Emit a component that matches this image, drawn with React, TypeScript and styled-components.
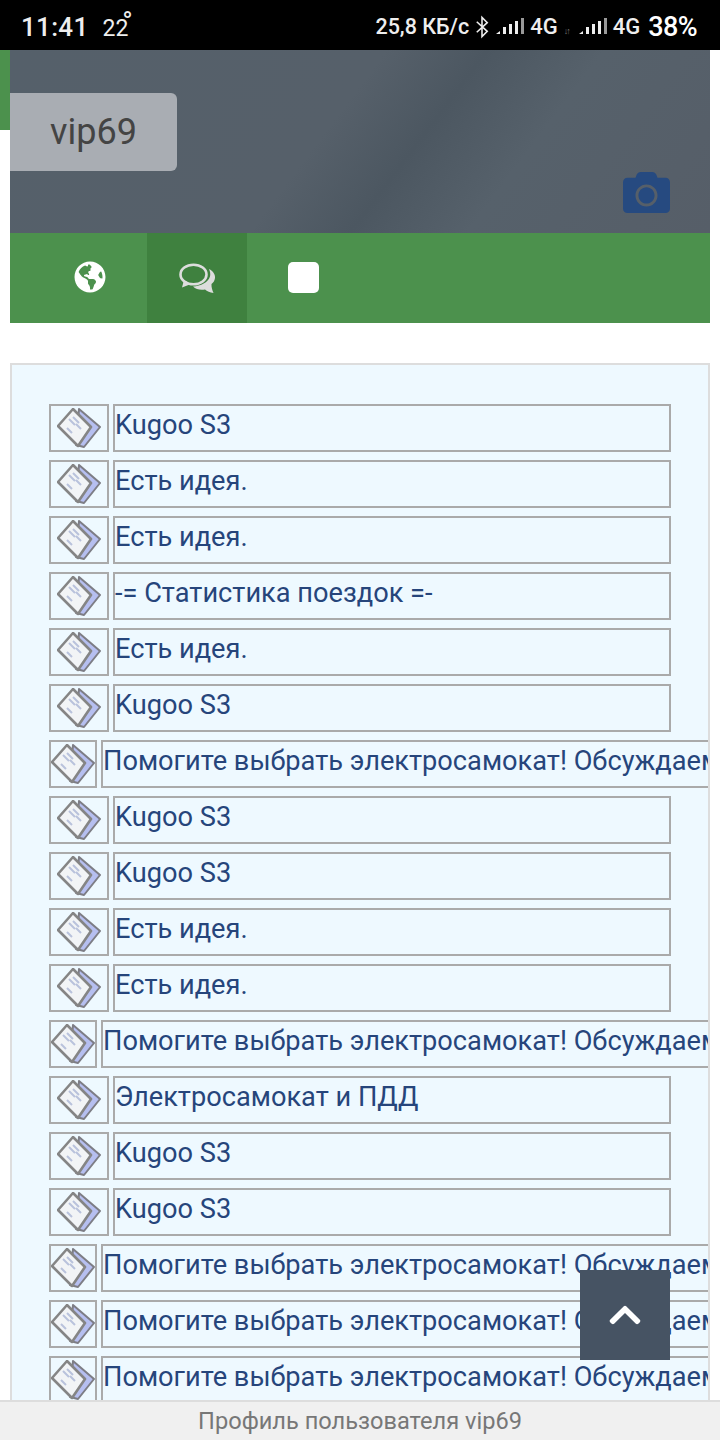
import { FC } from 'react';
import styled, { createGlobalStyle } from 'styled-components';
import { FaCamera, FaChevronUp, FaGlobeAmericas } from 'react-icons/fa';

const topics = [
  { title: 'Kugoo S3' },
  { title: 'Есть идея.' },
  { title: 'Есть идея.' },
  { title: '-= Статистика поездок =-' },
  { title: 'Есть идея.' },
  { title: 'Kugoo S3' },
  { title: 'Помогите выбрать электросамокат! Обсуждаем', long: true },
  { title: 'Kugoo S3' },
  { title: 'Kugoo S3' },
  { title: 'Есть идея.' },
  { title: 'Есть идея.' },
  { title: 'Помогите выбрать электросамокат! Обсуждаем', long: true },
  { title: 'Электросамокат и ПДД' },
  { title: 'Kugoo S3' },
  { title: 'Kugoo S3' },
  { title: 'Помогите выбрать электросамокат! Обсуждаем', long: true },
  { title: 'Помогите выбрать электросамокат! Обсуждаем', long: true },
  { title: 'Помогите выбрать электросамокат! Обсуждаем', long: true },
];

const Signal: FC = () => (
  <svg width="29" height="20" viewBox="0 0 29 20">
    <path d="M1 17l4-3v3z" fill="#eee" />
    <rect x="8" y="10" width="3" height="7" fill="#eee" />
    <rect x="14" y="7" width="3" height="10" fill="#eee" />
    <rect x="20" y="4" width="3" height="13" fill="#eee" />
    <rect x="26" y="1" width="3" height="16" fill="#999" />
  </svg>
);

const Bluetooth: FC = () => (
  <svg width="14" height="24" viewBox="0 0 16 24" fill="none" stroke="#eee" strokeWidth="1.8">
    <path d="M2 6l12 11-6 6V1l6 6L2 18" />
  </svg>
);

const Comments: FC = () => (
  <svg width="37" height="30" viewBox="0 0 37 30">
    <ellipse cx="14.5" cy="11.5" rx="13" ry="9.8" fill="none" stroke="#ddd" strokeWidth="2.6" />
    <path d="M5 17l-2 7.5 9-3.5z" fill="#ddd" />
    <path
      d="M30 6c4 2 6.500 5.500 6 9-.3 2.500-1.500 4.500-3.500 6-.2 3 .7 6 2 9-3.500-.5-6.500-1.500-8.500-3.500-4.500.8-9 0-12-3 8-.5 15-4 17-10 .6-2.500.2-5-1-7.500z"
      fill="#ddd"
    />
  </svg>
);

const TopicIcon: FC = () => (
  <svg width="44" height="41" viewBox="0 0 44 41">
    <path d="M22 1l21 18-16 20-8-2z" fill="#b6bff0" stroke="#7d7d85" strokeWidth="2" strokeLinejoin="round" />
    <path d="M1 18L16 1l18 18-13 19z" fill="#f2f4f6" stroke="#858585" strokeWidth="2.6" strokeLinejoin="round" />
    <path d="M12 11l6 6M16 9l6 6M19 16l5 5M10 20l5 5" stroke="#b9c2dc" strokeWidth="2" />
  </svg>
);

const App: FC = () => {
  return (
    <>
      <GlobalStyle />
      <StatusBar>
        <Clock>11:41</Clock>
        <Temperature>
          22<sup>°</sup>
        </Temperature>
        <StatusRight>
          <NetSpeed>25,8 КБ/с</NetSpeed>
          <Bluetooth />
          <Signal />
          <Network>4G</Network>
          <TinyArrows>↓↑</TinyArrows>
          <Signal />
          <Network>4G</Network>
          <Battery>38%</Battery>
        </StatusRight>
      </StatusBar>
      <HeroRow>
        <GreenStrip />
        <Hero>
          <NameTag>vip69</NameTag>
          <CameraButton>
            <FaCamera size={47} />
          </CameraButton>
        </Hero>
      </HeroRow>
      <Tabs>
        <Tab $width={137}>
          <FaGlobeAmericas size={32} color="#fff" />
        </Tab>
        <Tab $width={100} $active>
          <Comments />
        </Tab>
        <Tab $width={82}>
          <EmptyIcon />
        </Tab>
      </Tabs>
      <Panel>
        {topics.map((topic, i) => (
          <Row key={i}>
            <IconBox $long={topic.long}>
              <TopicIcon />
            </IconBox>
            <TitleBox $long={topic.long}>{topic.title}</TitleBox>
          </Row>
        ))}
      </Panel>
      <ScrollTop>
        <FaChevronUp size={36} color="#fff" />
      </ScrollTop>
      <Footer>Профиль пользователя vip69</Footer>
    </>
  );
};

export default App;

const GlobalStyle = createGlobalStyle`
  html, body {
    margin: 0;
    height: 1440px;
    overflow: hidden;
    background: #fff;
    font-family: Roboto, 'Noto Sans', sans-serif;
  }
  * {
    box-sizing: border-box;
  }
`;

const StatusBar = styled.div`
  height: 50px;
  background: #000;
  color: #eee;
  display: flex;
  align-items: center;
  padding: 3px 23px 0 21px;
`;
const Clock = styled.span`
  font-size: 26px;
  font-weight: 500;
  letter-spacing: 0.3px;
`;
const Temperature = styled.span`
  font-size: 23px;
  margin-left: 14px;
  position: relative;
  top: 2px;
  sup {
    font-size: 28px;
    line-height: 0;
    margin-left: -6px;
    position: relative;
    top: 4px;
  }
`;
const StatusRight = styled.div`
  margin-left: auto;
  display: flex;
  align-items: center;
  gap: 6px;
`;
const NetSpeed = styled.span`
  font-size: 21.5px;
  font-weight: 500;
`;
const Network = styled.span`
  font-size: 22px;
  font-weight: 500;
`;
const TinyArrows = styled.span`
  font-size: 9px;
  color: #777;
  letter-spacing: -2px;
  width: 8px;
  margin-top: 8px;
`;
const Battery = styled.span`
  font-size: 27px;
  font-weight: 500;
  color: #fff;
  letter-spacing: -0.6px;
  margin-left: 2px;
`;

const HeroRow = styled.div`
  display: flex;
  padding-right: 10px;
  align-items: flex-start;
`;
const GreenStrip = styled.div`
  width: 10px;
  height: 80px;
  background: #4c914d;
`;
const Hero = styled.div`
  flex: 1;
  height: 183px;
  padding-top: 43px;
  display: flex;
  flex-direction: column;
  background: linear-gradient(127deg, #55606a 0%, #56606a 45%, #4c5761 57%, #56616b 71%, #565e68 100%);
`;
const NameTag = styled.div`
  width: 167px;
  height: 78px;
  background: #a9adb3;
  color: #444;
  border-radius: 0 6px 6px 0;
  font-size: 36px;
  text-align: center;
  line-height: 78px;
`;
const CameraButton = styled.div`
  align-self: flex-end;
  margin-right: 40px;
  color: #264a80;
  line-height: 0;
  margin-top: -2px;
`;

const Tabs = styled.div`
  height: 90px;
  margin: 0 10px;
  background: #4c914d;
  display: flex;
`;
const Tab = styled.div<{ $width: number; $active?: boolean }>`
  width: ${(p) => p.$width}px;
  background: ${(p) => (p.$active ? '#3f813f' : 'transparent')};
  display: flex;
  align-items: center;
  justify-content: ${(p) => (p.$active ? 'center' : 'flex-end')};
  padding: 0 ${(p) => (p.$active ? 0 : 41)}px ${(p) => (p.$active ? 0 : 2)}px 0;
  &:last-child {
    justify-content: flex-start;
    padding: 0 0 2px 41px;
  }
`;
const EmptyIcon = styled.div`
  width: 31px;
  height: 31px;
  border-radius: 5px;
  background: #fff;
`;

const Panel = styled.div`
  margin: 40px 10px 0;
  height: 1100px;
  padding: 39px 0 0 37px;
  background: #eef9ff;
  border: 2px solid #ddd;
  overflow: hidden;
`;
const Row = styled.div`
  display: flex;
  gap: 4px;
  height: 48px;
  margin-bottom: 8px;
`;
const IconBox = styled.div<{ $long?: boolean }>`
  flex-shrink: 0;
  width: ${(p) => (p.$long ? 48 : 60)}px;
  height: 48px;
  border: 2px solid #aaa;
  padding: 2px 0 0 ${(p) => (p.$long ? 0 : 6)}px;
  line-height: 0;
`;
const TitleBox = styled.div<{ $long?: boolean }>`
  flex-shrink: 0;
  width: ${(p) => (p.$long ? 'auto' : '558px')};
  height: 48px;
  border: 2px solid #aaa;
  color: #26457b;
  font-size: 27.2px;
  line-height: 38px;
  white-space: nowrap;
`;

const ScrollTop = styled.div`
  position: fixed;
  left: 580px;
  top: 1270px;
  width: 90px;
  height: 90px;
  background: #465363;
  display: flex;
  align-items: center;
  justify-content: center;
`;
const Footer = styled.div`
  position: fixed;
  left: 0;
  right: 0;
  top: 1400px;
  height: 40px;
  background: #f0f0f0;
  border-top: 2px solid #ddd;
  color: #777;
  font-size: 23.6px;
  line-height: 38px;
  text-align: center;
`;
